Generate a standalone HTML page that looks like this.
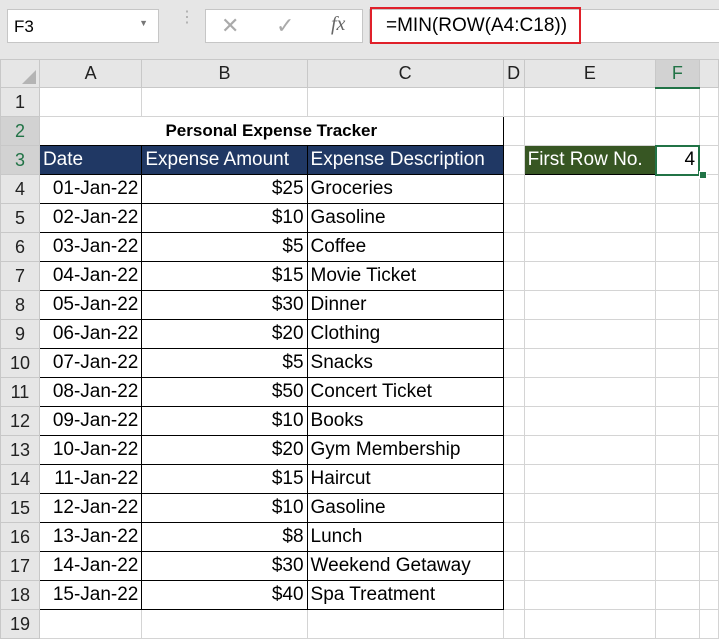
<!DOCTYPE html>
<html><head><style>
body{margin:0;width:719px;height:639px;background:#fff;position:relative;overflow:hidden;font-family:"Liberation Sans",sans-serif;}
.top{position:absolute;left:0;top:0;width:719px;height:59px;background:#e6e6e6;}
.box{position:absolute;background:#fff;border:1px solid #c6c6c6;box-sizing:border-box;}
.abs{position:absolute;}
table{position:absolute;left:0;top:59px;border-collapse:collapse;table-layout:fixed;}
td{border:1px solid #d4d4d4;height:29px;padding:0 3px;font-size:19px;white-space:nowrap;overflow:hidden;box-sizing:border-box;}
tr:first-child td{background:#e6e6e6;text-align:center;border-color:#c8c8c8;color:#222;height:28px;font-size:18px}
td.rh{background:#e6e6e6;text-align:center;border-color:#c8c8c8;padding:0;color:#222;font-size:18px}
.r{text-align:right}
.tb{border:1px solid #000}
.hd{background:#203864;color:#fff;border:1px solid #000}
</style></head><body>
<div class="top"></div>
<div class="box" style="left:7px;top:9px;width:152px;height:34px;font-size:17px;padding:7px 0 0 6px;">F3<span style="position:absolute;right:10px;top:8px;font-size:9px;color:#777">▼</span></div>
<div class="abs" style="left:179px;top:14px;color:#aaa;font-size:16px;line-height:8px">⋮</div>
<div class="box" style="left:205px;top:9px;width:158px;height:34px;">
<span class="abs" style="left:15px;top:3px;font-size:22px;color:#aaa">✕</span>
<span class="abs" style="left:70px;top:3px;font-size:22px;color:#aaa">✓</span>
<span class="abs" style="left:125px;top:3px;font-size:20px;color:#666;font-family:'Liberation Serif',serif;font-style:italic">fx</span></div>
<div class="box" style="left:369px;top:9px;width:350px;height:34px;border-right:none"></div>
<div class="abs" style="left:370px;top:7px;width:211px;height:37px;border:2px solid #e0202a;box-sizing:border-box;font-size:19px;padding:6px 0 0 14px;">=MIN(ROW(A4:C18))</div>
<table>
<colgroup><col style="width:40px"><col style="width:103px"><col style="width:166px"><col style="width:197px"><col style="width:21px"><col style="width:132px"><col style="width:45px"><col style="width:20px"></colgroup>
<tr><td></td><td>A</td><td>B</td><td>C</td><td>D</td><td>E</td><td style="background:#d2d2d2;color:#217346;border-bottom:2px solid #217346">F</td><td></td></tr>
<tr><td class="rh">1</td><td></td><td></td><td></td><td></td><td></td><td></td><td></td></tr>
<tr><td class="rh" style="background:#d2d2d2;color:#217346">2</td><td colspan="3" class="tb" style="text-align:center;font-weight:bold;font-size:17px">Personal Expense Tracker</td><td></td><td></td><td></td><td></td></tr>
<tr><td class="rh" style="background:#d2d2d2;color:#217346">3</td><td class="hd">Date</td><td class="hd">Expense Amount</td><td class="hd">Expense Description</td><td></td><td style="background:#375623;color:#fff;border:1px solid #000">First Row No.</td><td class="r" style="border:2px solid #217346">4</td><td></td></tr>
<tr><td class="rh">4</td><td class="tb r">01-Jan-22</td><td class="tb r">$25</td><td class="tb">Groceries</td><td></td><td></td><td></td><td></td></tr>
<tr><td class="rh">5</td><td class="tb r">02-Jan-22</td><td class="tb r">$10</td><td class="tb">Gasoline</td><td></td><td></td><td></td><td></td></tr>
<tr><td class="rh">6</td><td class="tb r">03-Jan-22</td><td class="tb r">$5</td><td class="tb">Coffee</td><td></td><td></td><td></td><td></td></tr>
<tr><td class="rh">7</td><td class="tb r">04-Jan-22</td><td class="tb r">$15</td><td class="tb">Movie Ticket</td><td></td><td></td><td></td><td></td></tr>
<tr><td class="rh">8</td><td class="tb r">05-Jan-22</td><td class="tb r">$30</td><td class="tb">Dinner</td><td></td><td></td><td></td><td></td></tr>
<tr><td class="rh">9</td><td class="tb r">06-Jan-22</td><td class="tb r">$20</td><td class="tb">Clothing</td><td></td><td></td><td></td><td></td></tr>
<tr><td class="rh">10</td><td class="tb r">07-Jan-22</td><td class="tb r">$5</td><td class="tb">Snacks</td><td></td><td></td><td></td><td></td></tr>
<tr><td class="rh">11</td><td class="tb r">08-Jan-22</td><td class="tb r">$50</td><td class="tb">Concert Ticket</td><td></td><td></td><td></td><td></td></tr>
<tr><td class="rh">12</td><td class="tb r">09-Jan-22</td><td class="tb r">$10</td><td class="tb">Books</td><td></td><td></td><td></td><td></td></tr>
<tr><td class="rh">13</td><td class="tb r">10-Jan-22</td><td class="tb r">$20</td><td class="tb">Gym Membership</td><td></td><td></td><td></td><td></td></tr>
<tr><td class="rh">14</td><td class="tb r">11-Jan-22</td><td class="tb r">$15</td><td class="tb">Haircut</td><td></td><td></td><td></td><td></td></tr>
<tr><td class="rh">15</td><td class="tb r">12-Jan-22</td><td class="tb r">$10</td><td class="tb">Gasoline</td><td></td><td></td><td></td><td></td></tr>
<tr><td class="rh">16</td><td class="tb r">13-Jan-22</td><td class="tb r">$8</td><td class="tb">Lunch</td><td></td><td></td><td></td><td></td></tr>
<tr><td class="rh">17</td><td class="tb r">14-Jan-22</td><td class="tb r">$30</td><td class="tb">Weekend Getaway</td><td></td><td></td><td></td><td></td></tr>
<tr><td class="rh">18</td><td class="tb r">15-Jan-22</td><td class="tb r">$40</td><td class="tb">Spa Treatment</td><td></td><td></td><td></td><td></td></tr>
<tr><td class="rh">19</td><td></td><td></td><td></td><td></td><td></td><td></td><td></td></tr>
</table>
<div class="abs" style="left:699px;top:171px;width:6px;height:6px;background:#217346;border:1px solid #fff"></div>
<div class="abs" style="left:22px;top:70px;width:0;height:0;border-left:14px solid transparent;border-bottom:14px solid #b4b4b4"></div>
</body></html>
